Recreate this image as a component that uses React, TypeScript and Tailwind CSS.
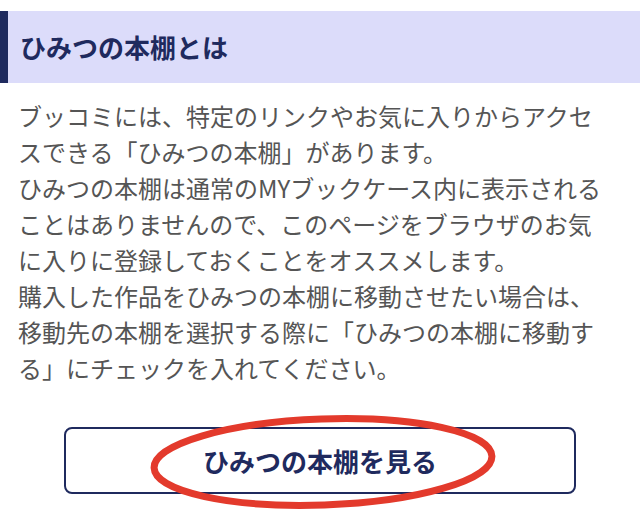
import React from "react";

const lines = [
  "ブッコミには、特定のリンクやお気に入りからアクセ",
  "スできる「ひみつの本棚」があります。",
  "ひみつの本棚は通常のMYブックケース内に表示される",
  "ことはありませんので、このページをブラウザのお気",
  "に入りに登録しておくことをオススメします。",
  "購入した作品をひみつの本棚に移動させたい場合は、",
  "移動先の本棚を選択する際に「ひみつの本棚に移動す",
  "る」にチェックを入れてください。",
];

export default function App() {
  return (
    <div
      className="w-[640px] h-[532px] bg-white overflow-hidden pt-[11px]"
      style={{ fontFamily: '"Noto Sans CJK JP", "Noto Sans", sans-serif' }}
    >
      <div className="h-[72px] bg-[#dcdcfa] border-l-[8px] border-[#1f2a5e] flex items-center pl-[12px]">
        <h2 className="text-[26px] font-bold text-[#1f2a5e] leading-none">ひみつの本棚とは</h2>
      </div>
      <div className="pt-[15px] pl-[18px] text-[24px] leading-[36px] text-[#555555]">
        {lines.map((l, i) => (
          <div key={i} className="whitespace-nowrap">{l}</div>
        ))}
      </div>
      <div className="mt-[41px] px-[64px]">
        <div className="relative h-[67px] border-2 border-[#1f2a5e] rounded-[8px] flex items-center justify-center">
          <span className="text-[26px] font-bold text-[#1f2a5e] leading-none">ひみつの本棚を見る</span>
          <svg
            className="absolute left-[82px] top-[-16px] pointer-events-none"
            width="350"
            height="98"
            viewBox="0 0 350 98"
          >
            <ellipse
              cx="175"
              cy="49"
              rx="169"
              ry="43"
              fill="none"
              stroke="#e33a2c"
              strokeWidth="7"
              transform="rotate(-2 175 49)"
            />
          </svg>
        </div>
      </div>
    </div>
  );
}
